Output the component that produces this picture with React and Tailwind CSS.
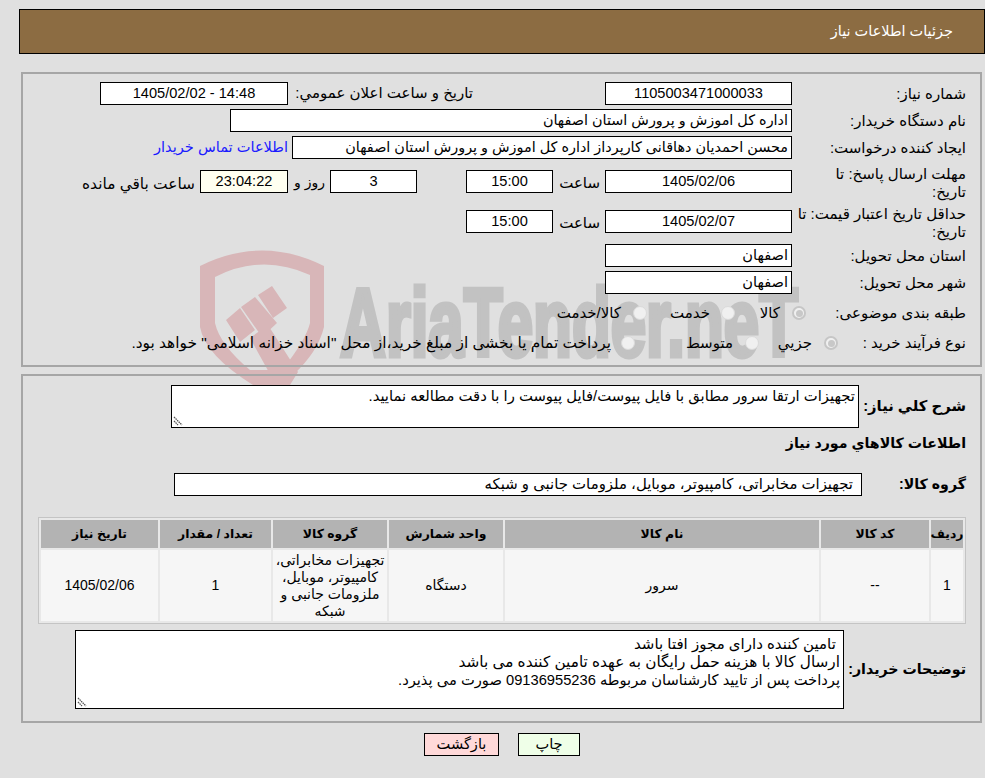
const sans = 'font-["Liberation_Sans","DejaVu_Sans",sans-serif]'

const Box = ({ className = '', size = 'text-[14.6px]', children }) => (
  <div className={'h-[23px] shrink-0 border border-black px-[3px] leading-[21px] whitespace-nowrap overflow-hidden ' + size + ' ' + className}>{children}</div>
)

const Label = ({ children, className = 'w-[140px]' }) => (
  <div className={'shrink-0 text-[15px] leading-[18px] ' + className}>{children}</div>
)

const Radio = ({ checked }) => (
  checked
    ? <span className="inline-flex h-[14px] w-[14px] shrink-0 items-center justify-center rounded-full border-2 border-[#c6c6c6] bg-[#f0f0f0]"><span className="h-[7px] w-[7px] rounded-full bg-[#c8c8c8]"></span></span>
    : <span className="h-[14px] w-[14px] shrink-0 rounded-full border border-[#dadada] bg-[#f0f0f0]"></span>
)

const Resize = () => (
  <svg className="absolute bottom-[1px] left-[1px]" width="10" height="10" viewBox="0 0 10 10">
    <path d="M1 1l8 8M1 5l4 4" stroke="#555" strokeWidth="1.3" strokeDasharray="1.5 .7" fill="none" />
  </svg>
)

const Watermark = () => (
  <svg className="absolute left-[195px] top-[245px] [direction:ltr]" width="620" height="145" viewBox="195 245 620 145">
    <path fill="#d8b6b8" fillRule="evenodd" d="M200 266Q262 235 324 266V327Q318 352 293 375L277 385H253Q205 355 200 327ZM215 277V323Q220 345 250 370H282Q306 340 310 323V275Q262 253 215 277Z" />
    <path fill="#d8b6b8" d="M226 320l14-12 15 22-15 12zM241 307l14-10 22 26-15 14zM258 295l14-9 15 22-14 10zM250 338l18-13 30 47-8 13h-14z" />
    <text x="340" y="356" direction="ltr" textAnchor="start" textLength="458" lengthAdjust="spacingAndGlyphs" fill="#c2c2c2" stroke="#c2c2c2" strokeWidth="5" fontFamily="Liberation Sans, sans-serif" fontWeight="700" fontSize="97">AriaTender.neT</text>
  </svg>
)

const rows = ['1', '--', 'سرور', 'دستگاه', 'تجهیزات مخابراتی، کامپیوتر، موبایل، ملزومات جانبی و شبکه', '1', '1405/02/06']
const heads = ['رديف', 'کد کالا', 'نام کالا', 'واحد شمارش', 'گروه کالا', 'تعداد / مقدار', 'تاريخ نياز']
const cols = 'grid-cols-[32px_108px_314px_114px_114px_111px_117px]'

export default function App() {
  return (
    <div dir="rtl" className={'relative h-[778px] w-[985px] overflow-hidden bg-[#e0e0e0] text-black ' + sans}>
      <div className="pt-[9px] pl-[19px]">
        <div className="flex h-[45px] items-center border border-black bg-[#8c6c42] pr-[31px] text-[14.5px] text-white">جزئیات اطلاعات نیاز</div>
      </div>

      <Watermark />

      <div className="relative mt-[18px] ml-[21px] mr-[3px] h-[295px] border-2 border-[#a6a6a6] pt-[8px] pr-[14px]">
        <div className="flex h-[23px] items-center">
          <Label>شماره نیاز:</Label>
          <Box className="mr-[34px] w-[187px] bg-white text-center">1105003471000033</Box>
          <div className="w-[317px] shrink-0 pr-[132px] text-[15px] whitespace-nowrap">تاریخ و ساعت اعلان عمومي:</div>
          <Box className="w-[188px] bg-white text-center">14:48 - 1405/02/02</Box>
        </div>
        <div className="mt-[4px] flex h-[23px] items-center">
          <Label>نام دستگاه خریدار:</Label>
          <Box size="text-[14.4px]" className="mr-[34px] w-[562px] bg-white">اداره کل اموزش و پرورش استان اصفهان</Box>
        </div>
        <div className="mt-[4px] flex h-[23px] items-center">
          <Label>ایجاد کننده درخواست:</Label>
          <Box size="text-[14.4px]" className="mr-[34px] w-[500px] bg-white">محسن احمدیان دهاقانی کارپرداز اداره کل اموزش و پرورش استان اصفهان</Box>
          <a className="mr-[4px] text-[14.6px] text-[#1a1aff] whitespace-nowrap">اطلاعات تماس خریدار</a>
        </div>
        <div className="mt-[8px] flex h-[36px] items-start">
          <Label className="-mt-[2px] w-[174px] pl-[12px]">مهلت ارسال پاسخ: تا تاریخ:</Label>
          <Box className="mt-[3px] w-[187px] bg-white text-center">1405/02/06</Box>
          <div className="mt-[5px] w-[52px] shrink-0 pr-[5px] text-[15px]">ساعت</div>
          <Box className="mt-[3px] w-[87px] bg-white text-center">15:00</Box>
          <Box className="mt-[3px] mr-[49px] w-[87px] bg-white text-center">3</Box>
          <div className="mt-[5px] w-[42px] shrink-0 pr-[5px] text-[14px] whitespace-nowrap">روز و</div>
          <Box className="mt-[3px] w-[88px] bg-[#fffff0] text-center">23:04:22</Box>
          <div className="mt-[5px] pr-[5px] text-[15.4px] whitespace-nowrap">ساعت باقي مانده</div>
        </div>
        <div className="mt-[4px] flex h-[33px] items-start">
          <Label className="-mt-[2px] w-[174px] pl-[2px]">حداقل تاریخ اعتبار قیمت: تا تاریخ:</Label>
          <Box className="mt-[3px] w-[187px] bg-white text-center">1405/02/07</Box>
          <div className="mt-[5px] w-[52px] shrink-0 pr-[5px] text-[15px]">ساعت</div>
          <Box className="mt-[3px] w-[87px] bg-white text-center">15:00</Box>
        </div>
        <div className="mt-[4px] flex h-[23px] items-center">
          <Label>استان محل تحویل:</Label>
          <Box className="mr-[34px] w-[187px] bg-white">اصفهان</Box>
        </div>
        <div className="mt-[4px] flex h-[23px] items-center">
          <Label>شهر محل تحویل:</Label>
          <Box className="mr-[34px] w-[187px] bg-white">اصفهان</Box>
        </div>
        <div className="mt-[9px] flex h-[20px] items-center text-[15px] whitespace-nowrap">
          <Label>طبقه بندی موضوعی:</Label>
          <div className="mr-[20px] flex w-[71px] shrink-0 items-center gap-[12px]"><Radio checked /><span>کالا</span></div>
          <div className="flex w-[88px] shrink-0 items-center gap-[11px]"><Radio /><span>خدمت</span></div>
          <div className="flex items-center gap-[12px]"><Radio /><span>کالا/خدمت</span></div>
        </div>
        <div className="mt-[10px] flex h-[20px] items-center text-[15px] whitespace-nowrap">
          <Label className="w-[128px]">نوع فرآیند خرید :</Label>
          <div className="flex w-[79px] shrink-0 items-center gap-[12px]"><Radio checked /><span>جزيي</span></div>
          <div className="flex w-[124px] shrink-0 items-center gap-[12px]"><Radio /><span>متوسط</span></div>
          <div className="flex items-center gap-[10px]"><Radio /><span className="text-[15.4px]">پرداخت تمام یا بخشی از مبلغ خرید،از محل "اسناد خزانه اسلامی" خواهد بود.</span></div>
        </div>
      </div>

      <div className="relative mt-[7px] ml-[21px] mr-[3px] h-[349px] border-2 border-[#a6a6a6] pr-[14px] pt-[9px]">
        <div className="flex items-center">
          <div className="w-[107px] shrink-0 text-[14.8px] font-bold whitespace-nowrap">شرح کلي نياز:</div>
          <div className="relative h-[43px] w-[688px] border border-black bg-white px-[3px] text-[14.8px] leading-[21px]">تجهیزات ارتقا سرور مطابق با فایل پیوست/فایل پیوست را با دقت مطالعه نمایید.<Resize /></div>
        </div>
        <div className="mt-[5px] text-[14.2px] leading-[20px] font-bold">اطلاعات کالاهاي مورد نياز</div>
        <div className="mt-[20px] flex items-center">
          <div className="w-[104px] shrink-0 text-[14.2px] font-bold whitespace-nowrap">گروه کالا:</div>
          <div className="h-[23px] w-[688px] border border-black bg-white pr-[8px] text-[14.9px] leading-[21px]">تجهیزات مخابراتی، کامپیوتر، موبایل، ملزومات جانبی و شبکه</div>
        </div>

        <div className="mt-[21px] w-[928px] border border-[#c4c4c4] bg-[#e8e8e8] p-[2px]">
          <div className={'grid gap-[2px] ' + cols}>
            {heads.map(h => (
              <div key={h} className="flex h-[28px] items-center justify-center bg-[#b3b3b3] text-[12.4px] font-bold whitespace-nowrap">{h}</div>
            ))}
          </div>
          <div className={'mt-[2px] grid gap-[2px] ' + cols}>
            {rows.map((c, i) => (
              <div key={i} className="flex h-[71px] items-center justify-center bg-[#f6f6f6] px-[2px] text-center text-[14px] leading-[17px]">{c}</div>
            ))}
          </div>
        </div>

        <div className="mt-[6px] flex items-center">
          <div className="w-[122px] shrink-0 text-[14.2px] font-bold whitespace-nowrap">توضیحات خریدار:</div>
          <div className="relative h-[79px] w-[769px] border border-black bg-white px-[3px] pt-[4px] text-[14.7px] leading-[18px]">
            <div className="text-[15px]">&nbsp;تامین کننده دارای مجوز افتا باشد</div>
            <div className="text-[15.3px]">ارسال کالا با هزینه حمل رایگان به عهده تامین کننده می باشد</div>
            <div>پرداخت پس از تایید کارشناسان مربوطه 09136955236 صورت می پذیرد.</div>
            <Resize />
          </div>
        </div>
      </div>

      <div className="mt-[10px] flex justify-center gap-[19px] pl-[19px]">
        <button className="h-[23px] w-[62px] border border-black bg-[#efffe8] text-[14.6px]">چاپ</button>
        <button className="h-[23px] w-[75px] border border-black bg-[#ffd9d9] text-[14.6px]">بازگشت</button>
      </div>
    </div>
  )
}
